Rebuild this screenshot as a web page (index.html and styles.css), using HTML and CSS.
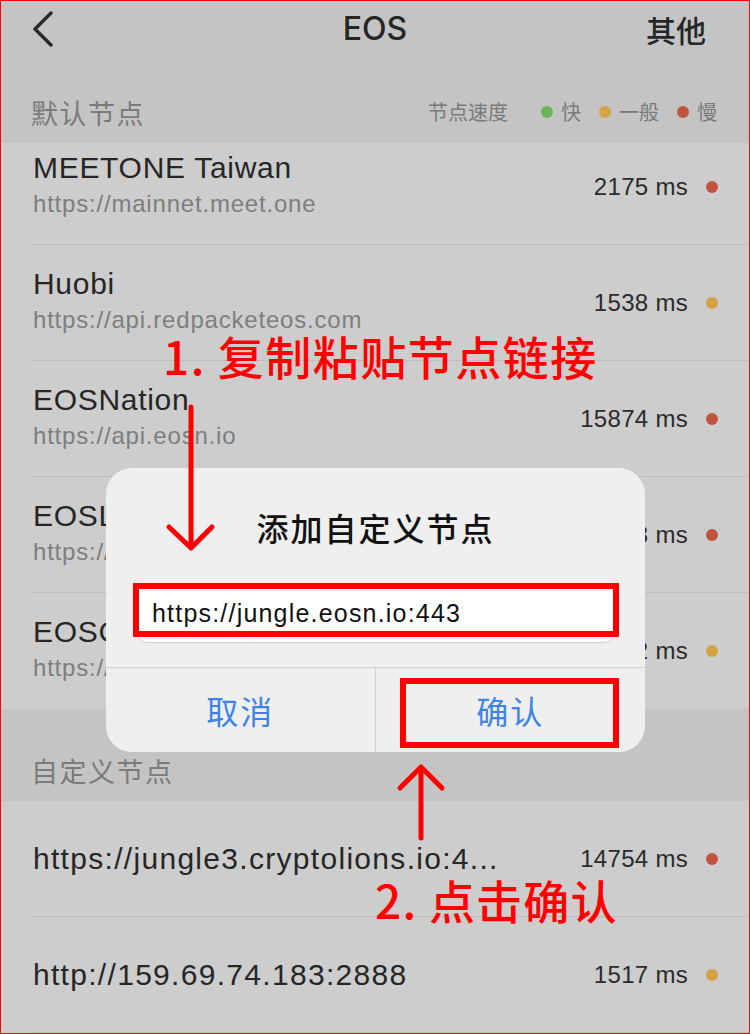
FILE: index.html
```html
<!DOCTYPE html>
<html lang="zh-CN">
<head>
<meta charset="utf-8">
<title>EOS 节点</title>
<link rel="stylesheet" href="styles.css">
</head>
<body>
<div class="screen">
  <header class="nav">
    <svg class="back" width="22" height="36" viewBox="0 0 22 36"><path d="M19 2 L3 18 L19 34" fill="none" stroke="#2a2a2a" stroke-width="3.4" stroke-linecap="round" stroke-linejoin="round"/></svg>
    <h1 class="nav-title">EOS</h1>
    <span class="nav-right">其他</span>
  </header>

  <div class="sec-head">
    <span class="sec-title">默认节点</span>
    <div class="legend">
      <span class="legend-label">节点速度</span>
      <span class="legend-item first"><i class="dot green"></i>快</span>
      <span class="legend-item"><i class="dot orange"></i>一般</span>
      <span class="legend-item"><i class="dot red"></i>慢</span>
    </div>
  </div>

  <div class="list list-default">
    <div class="row">
      <div class="info"><div class="name">MEETONE Taiwan</div><div class="url">https://mainnet.meet.one</div></div>
      <div class="speed"><span class="ms">2175 ms</span><i class="dot red"></i></div>
    </div>
    <div class="row">
      <div class="info"><div class="name">Huobi</div><div class="url">https://api.redpacketeos.com</div></div>
      <div class="speed"><span class="ms">1538 ms</span><i class="dot orange"></i></div>
    </div>
    <div class="row">
      <div class="info"><div class="name">EOSNation</div><div class="url">https://api.eosn.io</div></div>
      <div class="speed"><span class="ms">15874 ms</span><i class="dot red"></i></div>
    </div>
    <div class="row">
      <div class="info"><div class="name">EOSLaoMao</div><div class="url">https://api.eoslaomao.com</div></div>
      <div class="speed"><span class="ms">3128 ms</span><i class="dot red"></i></div>
    </div>
    <div class="row">
      <div class="info"><div class="name">EOSCannon</div><div class="url">https://mainnet.eoscannon.io</div></div>
      <div class="speed"><span class="ms">1432 ms</span><i class="dot orange"></i></div>
    </div>
  </div>

  <div class="sec-head sec-custom">
    <span class="sec-title">自定义节点</span>
  </div>

  <div class="list">
    <div class="row crow">
      <div class="curl">https://jungle3.cryptolions.io:4...</div>
      <div class="speed"><span class="ms">14754 ms</span><i class="dot red"></i></div>
    </div>
    <div class="row crow">
      <div class="curl">http://159.69.74.183:2888</div>
      <div class="speed"><span class="ms">1517 ms</span><i class="dot orange"></i></div>
    </div>
  </div>

  <div class="dialog">
    <div class="dlg-title">添加自定义节点</div>
    <div class="dlg-input">https://jungle.eosn.io:443</div>
    <div class="dlg-actions">
      <div class="dlg-btn cancel">取消</div>
      <div class="dlg-btn">确认</div>
    </div>
  </div>

  <div class="mark mark-input"></div>
  <div class="mark mark-confirm"></div>

  <div class="note note1">1. 复制粘贴节点链接</div>
  <div class="note note2">2. 点击确认</div>

  <svg class="arrows" width="750" height="1034" viewBox="1 1 750 1034">
    <g fill="none" stroke="#ff0000" stroke-width="5" stroke-linecap="round" stroke-linejoin="round">
      <path d="M192 408 V547"/>
      <path d="M170 528 L192 549 L213 528"/>
      <path d="M422 839 V769"/>
      <path d="M401 789 L422 768 L443 789"/>
    </g>
  </svg>
</div>
</body>
</html>
```
FILE: styles.css
```css
body {
  margin: 0;
  background: #c4c4c4;
}

.screen {
  position: relative;
  width: 750px;
  height: 1034px;
  box-sizing: border-box;
  border: 1px solid #ff0000;
  overflow: hidden;
  background: #c4c4c4;
  font-family: "Liberation Sans", "Noto Sans CJK SC", sans-serif;
  color: #262626;
}

/* nav */
.nav {
  height: 55px;
  display: grid;
  grid-template-columns: 1fr auto 1fr;
  align-items: center;
  padding: 0 37px;
}
.back {
  display: block;
  margin-left: -6px;
}
.nav-title {
  margin: 0;
  font-family: "Inter", "Liberation Sans", sans-serif;
  font-size: 32px;
  font-weight: 500;
  color: #262626;
  line-height: 1;
}
.nav-right {
  justify-self: end;
  margin-right: 6px;
  font-family: "Noto Sans CJK SC", sans-serif;
  font-size: 30px;
  font-weight: 500;
  color: #262626;
  line-height: 1;
}

/* section header */
.sec-head {
  height: 87px;
  box-sizing: border-box;
  padding: 25px 32px 0 30px;
  display: flex;
  justify-content: space-between;
  align-items: center;
}
.sec-title {
  font-family: "Noto Sans CJK SC", sans-serif;
  font-size: 27px;
  letter-spacing: 1.5px;
  color: #7b7b7b;
  line-height: 1;
}
.legend {
  display: flex;
  align-items: center;
  font-family: "Noto Sans CJK SC", sans-serif;
  font-size: 20px;
  color: #7a7a7a;
  line-height: 1;
}
.legend-item {
  display: flex;
  align-items: center;
  margin-left: 18px;
}
.legend-item.first { margin-left: 33px; }
.legend-item .dot { margin-right: 8px; }

.dot {
  display: inline-block;
  width: 12px;
  height: 12px;
  border-radius: 50%;
}
.green { background: #6cb25c; }
.orange { background: #d3a444; }
.red { background: #c0553f; }

/* lists */
.list { background: #cdcdcd; }
.list-default {
  height: 566px;
  overflow: hidden;
}
.list-default .row:first-child { margin-top: -14px; }
.list-default .row:last-child { border-bottom: 0; }

.row {
  height: 116px;
  box-sizing: border-box;
  margin-left: 30px;
  padding: 0 31px 0 2px;
  border-bottom: 1px solid #bdbdbd;
  display: flex;
  justify-content: space-between;
  align-items: center;
}
.info {
  align-self: flex-start;
  padding-top: 21px;
}
.name {
  font-size: 30px;
  line-height: 36px;
  letter-spacing: 0.7px;
  color: #262626;
}
.url {
  margin-top: 3px;
  font-size: 24px;
  line-height: 30px;
  letter-spacing: 0.8px;
  color: #7e7e7e;
}
.speed {
  display: flex;
  align-items: center;
  gap: 18px;
}
.ms {
  font-size: 24px;
  letter-spacing: 0.3px;
  color: #2b2b2b;
}

.sec-custom {
  height: 92px;
  padding-top: 30px;
}
.curl {
  font-size: 30px;
  letter-spacing: 1.3px;
  color: #262626;
}

/* dialog */
.dialog {
  position: absolute;
  left: 105px;
  top: 467px;
  width: 539px;
  height: 284px;
  border-radius: 26px;
  background: #efefef;
  display: flex;
  flex-direction: column;
}
.dlg-title {
  height: 117px;
  display: flex;
  align-items: center;
  justify-content: center;
  font-family: "Noto Sans CJK SC", sans-serif;
  font-size: 32px;
  font-weight: 500;
  letter-spacing: 2px;
  color: #111;
}
.dlg-input {
  margin: 0 31px;
  height: 57px;
  box-sizing: border-box;
  padding-left: 15px;
  display: flex;
  align-items: center;
  background: #fff;
  border-radius: 10px;
  box-shadow: 0 1px 1px rgba(0, 0, 0, 0.14);
  font-size: 25px;
  letter-spacing: 1.2px;
  color: #111;
}
.dlg-actions {
  margin-top: 25px;
  flex: 1;
  border-top: 1px solid #cfcfcf;
  display: grid;
  grid-template-columns: 1fr 1fr;
}
.dlg-btn {
  display: flex;
  align-items: center;
  justify-content: center;
  font-family: "Noto Sans CJK SC", sans-serif;
  font-size: 32px;
  letter-spacing: 2px;
  color: #3d84e6;
}
.dlg-btn.cancel { border-right: 1px solid #cfcfcf; }

/* annotations */
.mark {
  position: absolute;
  box-sizing: border-box;
  border: 6px solid #ff0000;
}
.mark-input {
  left: 132px;
  top: 582px;
  width: 486px;
  height: 54px;
}
.mark-confirm {
  left: 399px;
  top: 677px;
  width: 219px;
  height: 70px;
}
.note {
  position: absolute;
  font-family: "Noto Sans CJK SC", sans-serif;
  font-size: 46px;
  font-weight: 500;
  line-height: 46px;
  color: #ff0000;
  white-space: nowrap;
}
.note1 {
  left: 162px;
  top: 331px;
  letter-spacing: 1.5px;
}
.note2 {
  left: 374px;
  top: 875px;
  letter-spacing: 1.2px;
}
.arrows {
  position: absolute;
  left: -1px;
  top: -1px;
  pointer-events: none;
}
```
